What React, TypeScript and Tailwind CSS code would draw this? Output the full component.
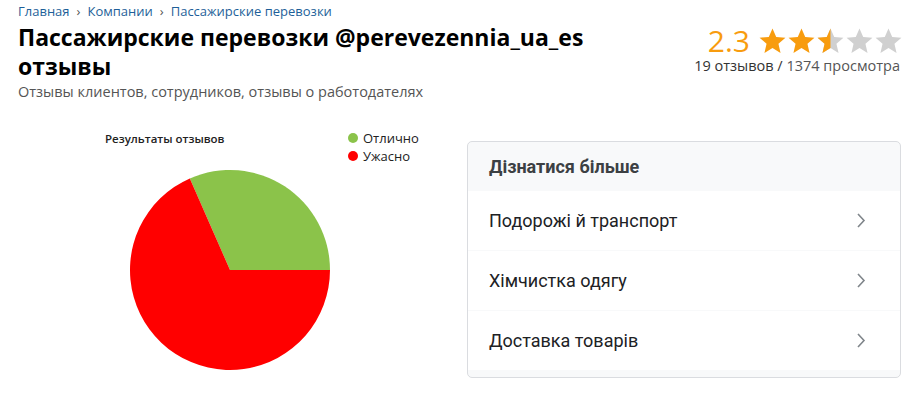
import React from "react";

const Star = ({ fill }: { fill: "full" | "half" | "empty" }) => {
  const d = "M12 1.2l3.2 7.3 7.9.7-6 5.2 1.8 7.8L12 18.1l-6.9 4.1 1.8-7.8-6-5.2 7.9-.7z";
  return (
    <svg width="29" height="28" viewBox="0 0 24 24">
      <defs>
        <clipPath id="halfclip">
          <rect x="0" y="0" width="12" height="24" />
        </clipPath>
      </defs>
      <path d={d} fill={fill === "full" ? "#f89c0e" : "#d0d0d0"} />
      {fill === "half" && <path d={d} fill="#f89c0e" clipPath="url(#halfclip)" />}
    </svg>
  );
};

const Chevron = () => (
  <svg width="10" height="17" viewBox="0 0 10 17" fill="none">
    <path d="M2 2l6 6.5-6 6.5" stroke="#80868b" strokeWidth="1.6" />
  </svg>
);

export default function App() {
  const cx = 100, cy = 100, r = 100;
  const a = (6 / 19) * Math.PI * 2;
  const ex = cx + r * Math.cos(a);
  const ey = cy - r * Math.sin(a);
  const rows = ["Подорожі й транспорт", "Хімчистка одягу", "Доставка товарів"];
  return (
    <div className="w-[914px] h-[400px] bg-white overflow-hidden pl-[18px] pr-[11px]" style={{ fontFamily: '"Open Sans", "Noto Sans", sans-serif' }}>
      <div className="flex justify-between h-[102px]">
        <div>
          <div className="text-[13px] leading-[16px] pt-[3px] text-[#1e5f99] flex gap-[7px]">
            <span>Главная</span><span className="text-[#555]">›</span><span>Компании</span><span className="text-[#555]">›</span><span>Пассажирские перевозки</span>
          </div>
          <h1 className="mt-[4px] text-[23px] leading-[29px] font-bold text-black">
            Пассажирские перевозки @perevezennia_ua_es<br />отзывы
          </h1>
          <div className="mt-[1px] text-[14.5px] leading-[20px] text-[#555]">Отзывы клиентов, сотрудников, отзывы о работодателях</div>
        </div>
        <div className="pt-[25px] flex flex-col items-end">
          <div className="flex items-center gap-[8px] h-[32px]">
            <span className="text-[30px] leading-[32px] text-[#f89c0e]">2.3</span>
            <div className="flex">
              <Star fill="full" /><Star fill="full" /><Star fill="half" /><Star fill="empty" /><Star fill="empty" />
            </div>
          </div>
          <div className="text-[14.5px] leading-[18px] text-[#333] mr-[3px]">19 отзывов / <span className="text-[#555]">1374 просмотра</span></div>
        </div>
      </div>
      <div className="flex">
        <div className="w-[449px]">
          <div className="flex pl-[87px] pt-[28px]">
            <div className="w-[243px] text-[11.5px] font-semibold text-[#222]">Результаты отзывов</div>
            <div className="text-[13px] leading-[18px] text-[#222] mt-[-1px]">
              <div className="flex items-center gap-[5px]"><span className="w-[10px] h-[10px] rounded-full bg-[#8bc34a] inline-block"></span>Отлично</div>
              <div className="flex items-center gap-[5px]"><span className="w-[10px] h-[10px] rounded-full bg-[#ff0000] inline-block"></span>Ужасно</div>
            </div>
          </div>
          <svg width="202" height="202" viewBox="-1 -1 202 202" className="ml-[111px] mt-[4px]">
            <path d={`M${cx} ${cy} L${cx + r} ${cy} A${r} ${r} 0 0 0 ${ex} ${ey} Z`} fill="#8bc34a" />
            <path d={`M${cx} ${cy} L${ex} ${ey} A${r} ${r} 0 1 0 ${cx + r} ${cy} Z`} fill="#ff0000" />
          </svg>
        </div>
        <div className="w-[434px] mt-[39px] h-[237px] border border-[#dadce0] rounded-[5px] overflow-hidden bg-[#f8f9fa] flex flex-col" style={{ fontFamily: 'Roboto, "Noto Sans", sans-serif' }}>
          <div className="h-[49px] shrink-0 flex items-center pl-[21px] text-[18px] font-bold text-[#3c4043]">Дізнатися більше</div>
          {rows.map((t, i) => (
            <div key={i} className="h-[59px] shrink-0 bg-white flex items-center justify-between pl-[21px] pr-[34px] text-[18px] text-[#202124] mb-[1px]">
              <span>{t}</span>
              <Chevron />
            </div>
          ))}
        </div>
      </div>
    </div>
  );
}
